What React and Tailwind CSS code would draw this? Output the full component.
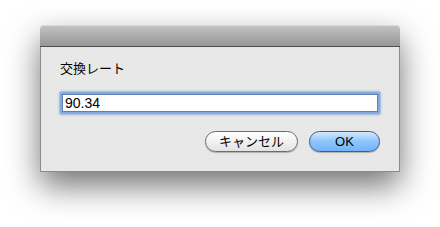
export default function App() {
  const font = { fontFamily: '"Lucida Grande", "Liberation Sans", "Noto Sans CJK JP", sans-serif' };
  return (
    <div className="w-[440px] h-[227px] bg-white pt-[25px] pl-[40px]" style={font}>
      <div className="w-[360px] h-[147px] flex flex-col rounded-t-[4px] shadow-[0_14px_32px_rgba(0,0,0,0.55)]">
        {/* title bar */}
        <div className="h-[22px] rounded-t-[4px] bg-gradient-to-b from-[#c4c4c4] to-[#979797] border-b border-[#4e4e4e] shadow-[inset_0_1px_0_#dcdcdc]" />
        {/* body */}
        <div className="flex-1 flex flex-col bg-[#e8e8e8] border-x border-b border-[#8a8a8a] px-[19px]">
          <div className="mt-[14px] text-[13px] leading-[16px] text-black">交換レート</div>
          <div className="mt-[15px] h-[22px] rounded-[2px] p-[2px] bg-[#86a9dc] shadow-[0_0_2px_1px_rgba(100,150,220,0.6)]">
            <div className="h-full bg-white border border-[#5f7fb5] pl-[2px] text-[14px] leading-[16px] text-black">
              90.34
            </div>
          </div>
          <div className="mt-[17px] flex justify-end gap-[11px]">
            <button className="w-[93px] h-[21px] rounded-full border border-[#6d6d6d] bg-gradient-to-b from-[#ffffff] via-[#f2f2f2] to-[#e2e2e2] text-[13px] leading-[18px] text-black shadow-[0_1px_1px_rgba(0,0,0,0.25)]">
              キャンセル
            </button>
            <button className="w-[71px] h-[21px] rounded-full border border-[#3d5c94] bg-gradient-to-b from-[#d4e9fe] via-[#8ec4fb] to-[#6fb5f9] text-[13px] leading-[18px] text-black shadow-[0_1px_1px_rgba(0,0,0,0.25)]">
              OK
            </button>
          </div>
        </div>
      </div>
    </div>
  );
}
